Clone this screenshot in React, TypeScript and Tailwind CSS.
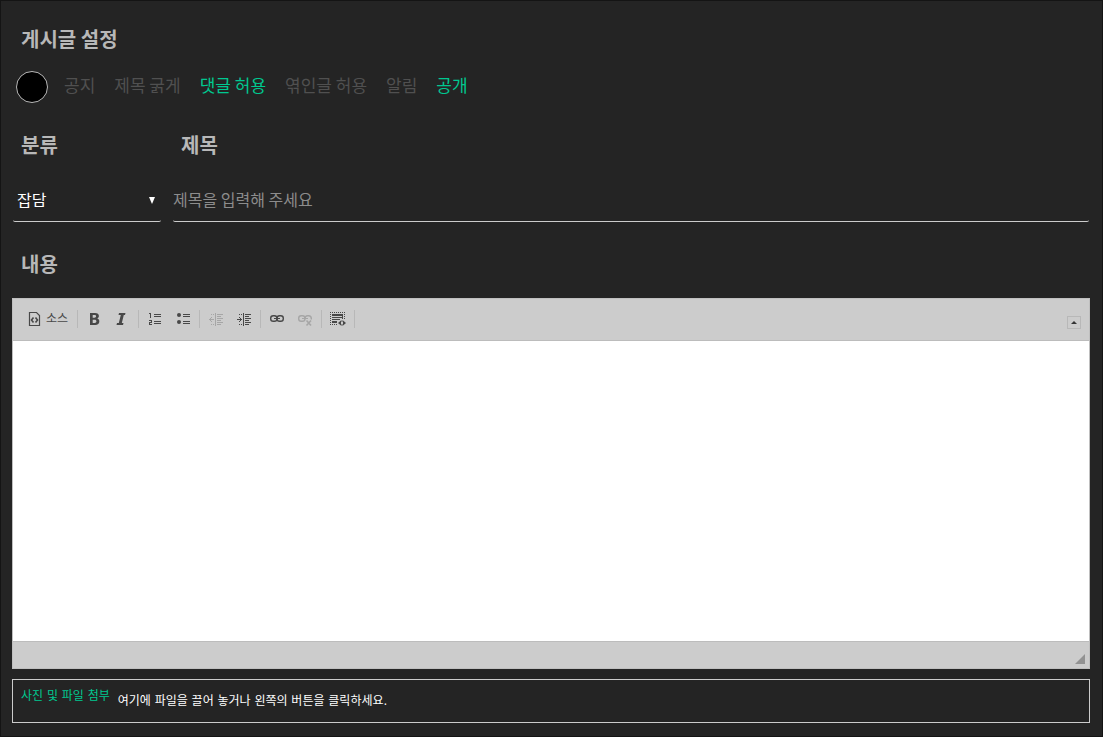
import { useState } from "react";
import type { ReactNode } from "react";

const OPTIONS = [
  { id: "notice", label: "공지", on: false },
  { id: "bold", label: "제목 굵게", on: false },
  { id: "comment", label: "댓글 허용", on: true },
  { id: "trackback", label: "엮인글 허용", on: false },
  { id: "notify", label: "알림", on: false },
  { id: "public", label: "공개", on: true },
];

function Icon({ children }: { children: ReactNode }) {
  return (
    <svg width="16" height="16" viewBox="0 0 16 16" fill="none" stroke="currentColor" aria-hidden="true">
      {children}
    </svg>
  );
}

function SourceIcon() {
  return (
    <Icon>
      <path d="M2.5 1.5h7l3 3v10h-10z" strokeWidth="1.2" />
      <path d="M6.5 6.5L4.500 9l2 2.5M8.500 6.500l2 2.5-2 2.5" strokeWidth="1.6" />
    </Icon>
  );
}

function BoldIcon() {
  return (
    <Icon>
      <path
        fill="currentColor"
        stroke="none"
        fillRule="evenodd"
        d="M4 2h5c2.6 0 3.900 1.1 3.900 3.100 0 1.200-.6 2.100-1.600 2.500 1.300.4 2 1.400 2 2.900C13.300 12.800 11.800 14 9.300 14H4zM6.700 4v2.700h1.800c1 0 1.600-.5 1.600-1.400S9.500 4 8.500 4zM6.700 8.700V12h2c1.100 0 1.700-.6 1.700-1.700s-.6-1.600-1.700-1.600z"
      />
    </Icon>
  );
}

function ItalicIcon() {
  return (
    <Icon>
      <path fill="currentColor" stroke="none" d="M5 2h6.500l-.5 2H9.800l-2 8H9.500l-.5 2H2.500l.5-2h1.800l2-8H4.500z" />
    </Icon>
  );
}

function NumberedIcon() {
  return (
    <Icon>
      <g shapeRendering="crispEdges">
        <path d="M2 2.500h2M3.500 2v5M2 9.500h3M4.500 9v3M2 11.500h3M2.500 11v3M2 13.500h3" />
        <path d="M7 3.500h7M7 5.500h7M7 10.500h7M7 12.500h7" />
      </g>
    </Icon>
  );
}

function BulletIcon() {
  return (
    <Icon>
      <circle cx="4" cy="4" r="2" fill="currentColor" stroke="none" />
      <circle cx="4" cy="11" r="2" fill="currentColor" stroke="none" />
      <path shapeRendering="crispEdges" d="M8 3.500h7M8 5.500h7M8 10.500h7M8 12.500h7" />
    </Icon>
  );
}

function IndentIcon({ outdent }: { outdent?: boolean }) {
  return (
    <Icon>
      <g shapeRendering="crispEdges">
        <path d="M3 3.500h1M5 3.500h1M3 13.500h1M5 13.500h1M7.500 2v13" />
        <path d="M9 3.500h6M9 5.500h4M9 7.500h6M9 9.500h4M9 11.500h6M9 13.500h4" />
        <path d="M1 8.500h5" />
        {outdent ? <path d="M2.500 7v3M3.500 6v1M3.500 10v1" /> : <path d="M4.500 7v3M3.500 6v1M3.500 10v1" />}
      </g>
    </Icon>
  );
}

function LinkIcon({ broken }: { broken?: boolean }) {
  return (
    <Icon>
      <rect x="1.700" y="4.700" width="6.300" height="5.600" rx="2.600" strokeWidth="1.400" />
      {broken ? (
        <path d="M8 7.500C8 5.800 9 4.700 10.600 4.700h1c1.600 0 2.700 1.100 2.700 2.800v1" strokeWidth="1.400" />
      ) : (
        <rect x="8" y="4.700" width="6.300" height="5.600" rx="2.600" strokeWidth="1.400" />
      )}
      <path shapeRendering="crispEdges" d="M5 7.500h6" />
      {broken && <path strokeWidth="1.600" d="M9.500 9.500l4.500 5M14 9.500l-4.500 5" />}
    </Icon>
  );
}

function BlocksIcon() {
  return (
    <Icon>
      <g shapeRendering="crispEdges">
        <path strokeDasharray="1 1" d="M0 1.500h15M0 13.500h8M.5 1v13M14.500 1v8" />
        <path d="M2 3.500h11M2 4.500h11M2 6.500h11M2 8.500h8M2 10.500h5M2 11.500h5" />
        <path d="M12.500 3v5" />
      </g>
      <path fill="currentColor" stroke="none" d="M11.500 9v6L8 12zM12.500 9v6l3.500-3z" />
      <path stroke="#cccccc" d="M11.500 11v2M12.500 11v2" />
    </Icon>
  );
}

const TOOL_GROUPS = [
  [
    { label: "굵게", icon: <BoldIcon /> },
    { label: "기울임꼴", icon: <ItalicIcon /> },
  ],
  [
    { label: "순서 있는 목록", icon: <NumberedIcon /> },
    { label: "순서 없는 목록", icon: <BulletIcon /> },
  ],
  [
    { label: "내어쓰기", icon: <IndentIcon outdent />, disabled: true },
    { label: "들여쓰기", icon: <IndentIcon /> },
  ],
  [
    { label: "링크 삽입", icon: <LinkIcon /> },
    { label: "링크 지우기", icon: <LinkIcon broken />, disabled: true },
  ],
  [{ label: "블록 보기", icon: <BlocksIcon /> }],
];

function Separator() {
  return <span className="mx-0.5 h-[18px] w-px bg-[#b8b8b8]" />;
}

function Toolbar() {
  return (
    <div className="flex h-[42px] items-start border-b border-[#bcbcbc] bg-[#cccccc] px-2 pt-[11px] text-[#484848]">
      <button type="button" className="flex h-[18px] items-center gap-0.5 px-1.5 text-xs">
        <SourceIcon />
        <span className="w-6 pb-0.5 whitespace-nowrap">소스</span>
      </button>
      <Separator />
      {TOOL_GROUPS.map((group) => (
        <div key={group[0].label} className="flex items-center">
          {group.map((tool) => (
            <button
              key={tool.label}
              type="button"
              aria-label={tool.label}
              disabled={tool.disabled}
              className="flex h-[18px] w-7 items-center justify-center disabled:text-[#a6a6a6]"
            >
              {tool.icon}
            </button>
          ))}
          <Separator />
        </div>
      ))}
      <button
        type="button"
        aria-label="툴바 줄이기"
        className="mt-1.5 ml-auto flex h-[13px] w-3.5 items-center justify-center border border-[#b8b8b8]"
      >
        <svg width="6" height="3" viewBox="0 0 6 3" fill="#333333" aria-hidden="true">
          <path d="M0 3l3-3 3 3z" />
        </svg>
      </button>
    </div>
  );
}

export default function App() {
  const [checked, setChecked] = useState(OPTIONS.filter((o) => o.on).map((o) => o.id));
  const [title, setTitle] = useState("");

  const toggle = (id: string) =>
    setChecked((prev) => (prev.includes(id) ? prev.filter((v) => v !== id) : [...prev, id]));

  return (
    <form className="min-h-screen border border-[#141414] bg-[#242424] pt-6 pr-3 pb-[13px] pl-[11px] font-['Noto_Sans_CJK_KR',sans-serif] text-[#b8b8b8]">
      <h2 className="px-[9px] text-xl leading-7 font-bold">게시글 설정</h2>

      <div className="mt-[18px] flex items-center pl-1">
        <button
          type="button"
          aria-label="제목 색상"
          className="mr-4 size-8 rounded-full border border-[#b8b8b8] bg-black"
        />
        <div className="flex gap-[19px] pb-1">
          {OPTIONS.map((option) => (
            <label
              key={option.id}
              className={`cursor-pointer text-[17px] leading-6 ${
                checked.includes(option.id) ? "text-[#00c890]" : "text-[#505050]"
              }`}
            >
              <input
                type="checkbox"
                className="sr-only"
                checked={checked.includes(option.id)}
                onChange={() => toggle(option.id)}
              />
              {option.label}
            </label>
          ))}
        </div>
      </div>

      <div className="mt-7 flex gap-3 px-px">
        <div className="w-[148px]">
          <label htmlFor="category" className="block px-2 text-xl leading-7 font-bold">
            분류
          </label>
          <div className="relative mt-5">
            <select
              id="category"
              className="h-[43px] w-full appearance-none rounded-xs border-b border-[#cccccc] bg-transparent px-1 pb-0.5 text-base text-white outline-none"
            >
              <option>잡담</option>
            </select>
            <svg
              className="pointer-events-none absolute top-[18px] right-1.5"
              width="6"
              height="7"
              viewBox="0 0 6 7"
              fill="white"
              aria-hidden="true"
            >
              <path d="M0 0h6L3 7z" />
            </svg>
          </div>
        </div>
        <div className="flex-1">
          <label htmlFor="title" className="block px-2 text-xl leading-7 font-bold">
            제목
          </label>
          <input
            id="title"
            type="text"
            value={title}
            onChange={(e) => setTitle(e.target.value)}
            placeholder="제목을 입력해 주세요"
            className="mt-5 h-[43px] w-full rounded-xs border-b border-[#cccccc] bg-transparent pb-0.5 text-base text-white outline-none placeholder:text-[#8c8c8c]"
          />
        </div>
      </div>

      <label htmlFor="content" className="mt-7 block px-[9px] text-xl leading-7 font-bold">
        내용
      </label>

      <div className="mt-5 border border-[#bfbfbf]">
        <Toolbar />
        <textarea id="content" className="block h-[300px] w-full resize-none bg-white p-5 text-sm text-black outline-none" />
        <div className="flex h-[27px] items-end justify-end border-t border-[#bcbcbc] bg-[#cccccc] p-1">
          <svg width="10" height="10" viewBox="0 0 10 10" fill="#929292" aria-hidden="true">
            <path d="M10 0v10H0z" />
          </svg>
        </div>
      </div>

      <div className="mt-2.5 flex h-11 items-start gap-2 border border-[#cccccc] px-2 font-['DejaVu_Sans','Noto_Sans_CJK_KR',sans-serif] text-xs">
        <button type="button" className="mt-2 leading-4 text-[#00c890]">
          사진 및 파일 첨부
        </button>
        <p className="mt-3 leading-[18px] text-white">여기에 파일을 끌어 놓거나 왼쪽의 버튼을 클릭하세요.</p>
      </div>
    </form>
  );
}
